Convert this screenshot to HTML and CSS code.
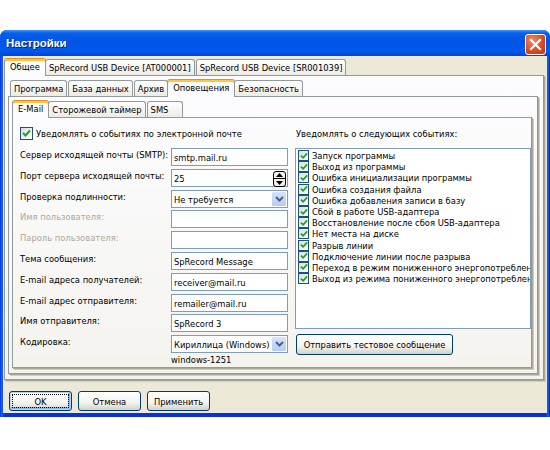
FILE: index.html
```html
<!DOCTYPE html>
<html>
<head>
  <title>Настройки</title>
  <link rel="stylesheet" href="styles.css">
</head>
<body>
  <div class="window">
    <div class="titlebar">
      <span class="title">Настройки</span>
      <span class="close">
        <svg width="13" height="13" viewBox="0 0 13 13"><path d="M2 2 L11 11 M11 2 L2 11" stroke="#fff" stroke-width="2.2" stroke-linecap="square"/></svg>
      </span>
    </div>

    <div class="body">
      <div class="tabs">
        <div class="tabstrip">
          <span class="tab active">Общее</span>
          <span class="tab">SpRecord USB Device [AT000001]</span>
          <span class="tab">SpRecord USB Device [SR001039]</span>
        </div>
        <div class="pane">

          <div class="tabs">
            <div class="tabstrip">
              <span class="tab">Программа</span>
              <span class="tab">База данных</span>
              <span class="tab">Архив</span>
              <span class="tab active">Оповещения</span>
              <span class="tab">Безопасность</span>
            </div>
            <div class="pane">

              <div class="tabs">
                <div class="tabstrip">
                  <span class="tab active">E-Mail</span>
                  <span class="tab">Сторожевой таймер</span>
                  <span class="tab sms">SMS</span>
                </div>
                <div class="pane email">

                  <div class="left-col">
                    <div class="check-row">
                      <span class="cb"><svg width="9" height="9" viewBox="0 0 9 9"><path d="M1 4 L3.5 6.5 L8 1.5" fill="none" stroke="#21a121" stroke-width="2"/></svg></span>
                      Уведомлять о событиях по электронной почте
                    </div>
                    <div class="fields">
                      <label>Сервер исходящей почты (SMTP):</label>
                      <div class="input">smtp.mail.ru</div>

                      <label>Порт сервера исходящей почты:</label>
                      <div class="input spin-input">25
                        <span class="spin">
                          <span class="spin-btn"><svg width="7" height="4" viewBox="0 0 7 4"><path d="M0 4 L3.5 0 L7 4Z" fill="#000"/></svg></span>
                          <span class="spin-btn"><svg width="7" height="4" viewBox="0 0 7 4"><path d="M0 0 L3.5 4 L7 0Z" fill="#000"/></svg></span>
                        </span>
                      </div>

                      <label>Проверка подлинности:</label>
                      <div class="input combo">Не требуется
                        <span class="drop"><svg width="9" height="6" viewBox="0 0 9 6"><path d="M1 1 L4.5 4.5 L8 1" fill="none" stroke="#4d6185" stroke-width="2"/></svg></span>
                      </div>

                      <label class="disabled">Имя пользователя:</label>
                      <div class="input"></div>

                      <label class="disabled">Пароль пользователя:</label>
                      <div class="input"></div>

                      <label>Тема сообщения:</label>
                      <div class="input">SpRecord Message</div>

                      <label>E-mail адреса получателей:</label>
                      <div class="input">receiver@mail.ru</div>

                      <label>E-mail адрес отправителя:</label>
                      <div class="input">remailer@mail.ru</div>

                      <label>Имя отправителя:</label>
                      <div class="input">SpRecord 3</div>

                      <label>Кодировка:</label>
                      <div class="input combo">Кириллица (Windows)
                        <span class="drop"><svg width="9" height="6" viewBox="0 0 9 6"><path d="M1 1 L4.5 4.5 L8 1" fill="none" stroke="#4d6185" stroke-width="2"/></svg></span>
                      </div>

                      <span></span>
                      <span class="charset">windows-1251</span>
                    </div>
                  </div>

                  <div class="right-col">
                    <div class="events-title">Уведомлять о следующих событиях:</div>
                    <div class="listbox">
                      <div class="item"><span class="cb small"><svg width="8" height="8" viewBox="0 0 9 9"><path d="M1 4 L3.5 6.5 L8 1.5" fill="none" stroke="#21a121" stroke-width="2"/></svg></span>Запуск программы</div>
                      <div class="item"><span class="cb small"><svg width="8" height="8" viewBox="0 0 9 9"><path d="M1 4 L3.5 6.5 L8 1.5" fill="none" stroke="#21a121" stroke-width="2"/></svg></span>Выход из программы</div>
                      <div class="item"><span class="cb small"><svg width="8" height="8" viewBox="0 0 9 9"><path d="M1 4 L3.5 6.5 L8 1.5" fill="none" stroke="#21a121" stroke-width="2"/></svg></span>Ошибка инициализации программы</div>
                      <div class="item"><span class="cb small"><svg width="8" height="8" viewBox="0 0 9 9"><path d="M1 4 L3.5 6.5 L8 1.5" fill="none" stroke="#21a121" stroke-width="2"/></svg></span>Ошибка создания файла</div>
                      <div class="item"><span class="cb small"><svg width="8" height="8" viewBox="0 0 9 9"><path d="M1 4 L3.5 6.5 L8 1.5" fill="none" stroke="#21a121" stroke-width="2"/></svg></span>Ошибка добавления записи в базу</div>
                      <div class="item"><span class="cb small"><svg width="8" height="8" viewBox="0 0 9 9"><path d="M1 4 L3.5 6.5 L8 1.5" fill="none" stroke="#21a121" stroke-width="2"/></svg></span>Сбой в работе USB-адаптера</div>
                      <div class="item"><span class="cb small"><svg width="8" height="8" viewBox="0 0 9 9"><path d="M1 4 L3.5 6.5 L8 1.5" fill="none" stroke="#21a121" stroke-width="2"/></svg></span>Восстановление после сбоя USB-адаптера</div>
                      <div class="item"><span class="cb small"><svg width="8" height="8" viewBox="0 0 9 9"><path d="M1 4 L3.5 6.5 L8 1.5" fill="none" stroke="#21a121" stroke-width="2"/></svg></span>Нет места на диске</div>
                      <div class="item"><span class="cb small"><svg width="8" height="8" viewBox="0 0 9 9"><path d="M1 4 L3.5 6.5 L8 1.5" fill="none" stroke="#21a121" stroke-width="2"/></svg></span>Разрыв линии</div>
                      <div class="item"><span class="cb small"><svg width="8" height="8" viewBox="0 0 9 9"><path d="M1 4 L3.5 6.5 L8 1.5" fill="none" stroke="#21a121" stroke-width="2"/></svg></span>Подключение линии после разрыва</div>
                      <div class="item"><span class="cb small"><svg width="8" height="8" viewBox="0 0 9 9"><path d="M1 4 L3.5 6.5 L8 1.5" fill="none" stroke="#21a121" stroke-width="2"/></svg></span>Переход в режим пониженного энергопотребления</div>
                      <div class="item"><span class="cb small"><svg width="8" height="8" viewBox="0 0 9 9"><path d="M1 4 L3.5 6.5 L8 1.5" fill="none" stroke="#21a121" stroke-width="2"/></svg></span>Выход из режима пониженного энергопотребления</div>
                    </div>
                    <button class="btn test-btn">Отправить тестовое сообщение</button>
                  </div>

                </div>
              </div>

            </div>
          </div>

        </div>
      </div>

      <div class="footer">
        <button class="btn default">OK</button>
        <button class="btn">Отмена</button>
        <button class="btn">Применить</button>
      </div>
    </div>
  </div>
</body>
</html>
```

FILE: styles.css
```css
body {
  margin: 0;
  background: #fff;
  font-family: "DejaVu Sans Condensed", "Liberation Sans", sans-serif;
  font-size: 9.3px;
  color: #000;
}

.window {
  margin-top: 30px;
  width: 550px;
  height: 387px;
  display: flex;
  flex-direction: column;
  background: linear-gradient(90deg, #0831d9, #166aee 2px, #0831d9 4px, #0831d9 546px, #166aee 548px, #0019a8);
  border-radius: 7px 7px 0 0;
  box-sizing: border-box;
}

.titlebar {
  height: 26px;
  flex: none;
  display: flex;
  align-items: center;
  justify-content: space-between;
  padding: 0 4px 0 6px;
  border-radius: 7px 7px 0 0;
  background: linear-gradient(#3d95ff 0%, #0a5fe8 12%, #0055e5 45%, #0058ee 80%, #0046cf 100%);
}

.title {
  color: #fff;
  font-family: "Liberation Sans", Arial, sans-serif;
  font-weight: bold;
  font-size: 11.5px;
  text-shadow: 1px 1px 0 #0a1e78;
}

.close {
  width: 19px;
  height: 19px;
  margin-top: 2px;
  display: flex;
  align-items: center;
  justify-content: center;
  border: 1px solid #fff;
  border-radius: 3px;
  background: radial-gradient(circle at 35% 30%, #f08a6b, #d8451e 60%, #c23a14);
}

.body {
  flex: 1;
  display: flex;
  flex-direction: column;
  background: #ece9d8;
  margin: 0 3px 4px 3px;
  padding: 1px 1px 0 1px;
  min-height: 0;
}

/* tab controls */
.tabs {
  flex: 1;
  display: flex;
  flex-direction: column;
  min-height: 0;
}

.tabstrip {
  display: flex;
  align-items: flex-end;
  height: 18px;
  padding-left: 2px;
  flex: none;
}

.tab {
  height: 15px;
  line-height: 15px;
  padding: 0 3px;
  border: 1px solid #919b9c;
  border-bottom: none;
  border-radius: 3px 3px 0 0;
  background: linear-gradient(#fff, #ecebe6);
  white-space: nowrap;
  margin-right: 1px;
}

.tab.sms {
  min-width: 28px;
}

.tab.active {
  position: relative;
  z-index: 1;
  height: 17px;
  line-height: 16px;
  margin: 0 -1px -1px -2px;
  padding: 0 5px;
  background: #fcfcfe;
  border-top: 1px solid #e68b2c;
  box-shadow: inset 0 2px 0 #ffc73c;
}

.pane {
  flex: 1;
  display: flex;
  flex-direction: column;
  min-height: 0;
  padding: 2px 3px 3px 3px;
  margin-right: 2px;
  margin-bottom: 2px;
  background: linear-gradient(#fcfcfe, #f4f3ee);
  border: 1px solid #919b9c;
  box-shadow: 1px 1px 0 #aca899, 2px 2px 0 #d0cebf;
}

/* e-mail page */
.pane.email {
  flex-direction: row;
  gap: 7px;
  padding: 9px 0 0 7px;
}

.left-col {
  width: 268px;
}

.check-row {
  display: flex;
  align-items: center;
  height: 13px;
  margin-bottom: 8px;
}

.cb {
  width: 11px;
  height: 11px;
  margin-right: 3px;
  border: 1px solid #1c5180;
  background: linear-gradient(135deg, #dcdcd7, #fff);
  display: inline-flex;
  align-items: center;
  justify-content: center;
  flex: none;
}

.cb.small {
  width: 9px;
  height: 9px;
  margin-right: 3px;
}

.fields {
  display: grid;
  grid-template-columns: 151px 117px;
  grid-auto-rows: 18px;
  row-gap: 2.8px;
}

.fields label {
  line-height: 13px;
  white-space: nowrap;
}

.fields label.disabled {
  color: #aca899;
}

.input {
  position: relative;
  border: 1px solid #7f9db9;
  background: #fff;
  padding: 0 2px;
  line-height: 17px;
  white-space: nowrap;
}

.spin {
  position: absolute;
  right: 1px;
  top: 1px;
  width: 11px;
  height: 14px;
  display: flex;
  flex-direction: column;
  border: 1px solid #000;
  border-radius: 3px;
  background: #f0efe9;
}

.spin-btn {
  flex: 1;
  display: flex;
  align-items: center;
  justify-content: center;
}

.spin-btn + .spin-btn {
  border-top: 1px solid #000;
}

.drop {
  position: absolute;
  right: 1px;
  top: 1px;
  width: 14px;
  height: 14px;
  display: flex;
  align-items: center;
  justify-content: center;
  background: linear-gradient(#d6e2fc, #b6cbf7);
  border-radius: 1px;
}

.charset {
  line-height: 11px;
  margin-top: -2px;
}

.right-col {
  width: 236px;
  display: flex;
  flex-direction: column;
}

.events-title {
  height: 13px;
  line-height: 13px;
  margin-bottom: 8px;
  padding-left: 1px;
}

.listbox {
  height: 178px;
  border: 1px solid #7f9db9;
  background: #fff;
  padding: 1px 0 0 2px;
  overflow: hidden;
}

.item {
  display: flex;
  align-items: center;
  height: 11.2px;
  line-height: 11px;
  white-space: nowrap;
}

.btn {
  font-family: inherit;
  font-size: inherit;
  color: #000;
  height: 21px;
  padding: 0 6px;
  border: 1px solid #003c74;
  border-radius: 3px;
  background: linear-gradient(#fff, #f3f3ef 60%, #d6d0c5);
}

.test-btn {
  margin-top: 5px;
  margin-left: 1px;
  width: 157px;
}

.footer {
  height: 31px;
  flex: none;
  display: flex;
  gap: 6px;
  padding: 9px 0 0 5px;
  box-sizing: border-box;
}

.footer .btn {
  width: 63px;
  height: 20px;
}

.footer .btn.default {
  box-shadow: inset 0 0 0 1px #b9d1fa, inset -1px -1px 0 2px #8fb3ed;
  outline: 1px dotted #000;
  outline-offset: -4px;
}
```
